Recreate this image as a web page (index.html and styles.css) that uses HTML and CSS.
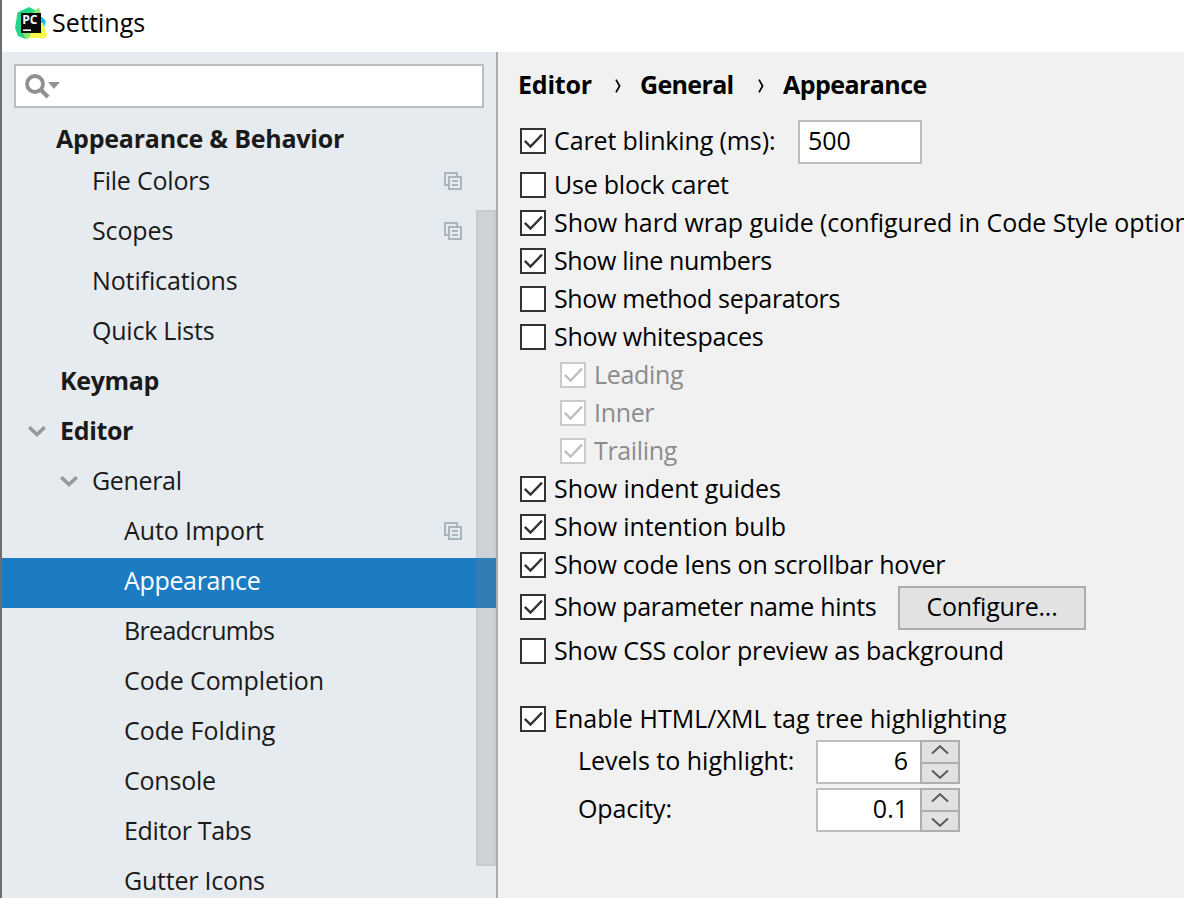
FILE: index.html
```html
<!DOCTYPE html>
<html lang="en">
<head>
<meta charset="utf-8">
<title>Settings</title>
<link rel="stylesheet" href="styles.css">
</head>
<body>
<svg width="0" height="0" class="defs">
  <symbol id="tick" viewBox="0 0 22 22"><path d="M2.8 10.8 8.5 16.5 20 4.6" fill="none" stroke="currentColor" stroke-width="2.4"/></symbol>
  <symbol id="copy" viewBox="0 0 18 18"><path d="M4 13H1V1h12v3M5 5h12v12H5zM8 9h6M8 13h6" fill="none" stroke="currentColor" stroke-width="2"/></symbol>
  <symbol id="down" viewBox="0 0 18 12"><path d="M1.2 1.2 9 8.6 16.8 1.2" fill="none" stroke="currentColor" stroke-width="3.6"/></symbol>
  <symbol id="crumb" viewBox="0 0 6 14"><path d="M1 .7 4.6 7 1 13.3" fill="none" stroke="currentColor" stroke-width="1.7"/></symbol>
  <symbol id="step" viewBox="0 0 18 10"><path d="M1 8.6 9 1.2 17 8.6" fill="none" stroke="currentColor" stroke-width="2"/></symbol>
</svg>
<div class="window">
  <header class="titlebar">
    <svg class="logo" width="32" height="32" viewBox="0 0 32 32">
      <path d="M2.500 5.500 14 0 20 3 22 25 11 32 3 29 0 21z" fill="#21d789"/>
      <path d="M23 10 27 10 31 14 29 21 23 25z" fill="#07c3f2"/>
      <path d="M15 8 24 .3 26 8z" fill="#8fe86b"/>
      <path d="M26 16 28 16 32 29 29 31 15 31 8 26z" fill="#fcf84a"/>
      <path d="M8 26h8l-2 5-3 1z" fill="#8fe86b"/>
      <path d="M6 6h20v20H6z" fill="#0b0b0b"/>
      <path d="M8 23.200h8" stroke="#fff" stroke-width="1.600"/>
      <text class="logo-text" x="7.200" y="17">PC</text>
    </svg>
    <h1 class="title">Settings</h1>
  </header>
  <div class="body">
    <aside class="sidebar">
      <div class="search">
        <svg width="36" height="26" viewBox="0 0 36 26"><g fill="none" stroke="#909090"><circle cx="10" cy="10" r="8" stroke-width="3.800"/><path d="M15.500 15.500 23 23" stroke-width="4.200"/></g><path d="M23 8h12L29 14.800z" fill="#909090"/></svg>
      </div>
      <div class="group t2">Appearance &amp; Behavior</div>
      <ul class="tree">
        <li class="l2 t2">File Colors<svg class="copy"><use href="#copy"/></svg></li>
        <li class="l2 t1">Scopes<svg class="copy"><use href="#copy"/></svg></li>
        <li class="l2 t1">Notifications</li>
        <li class="l2 t2">Quick Lists</li>
        <li class="l1 t3">Keymap</li>
        <li class="l1 t3"><svg class="arrow"><use href="#down"/></svg>Editor</li>
        <li class="l2 t3"><svg class="arrow"><use href="#down"/></svg>General</li>
        <li class="l3 t1">Auto Import<svg class="copy"><use href="#copy"/></svg></li>
        <li class="l3 t3 selected">Appearance</li>
        <li class="l3 t6">Breadcrumbs</li>
        <li class="l3 t1">Code Completion</li>
        <li class="l3">Code Folding</li>
        <li class="l3 t2">Console</li>
        <li class="l3 t3">Editor Tabs</li>
        <li class="l3 t2">Gutter Icons</li>
      </ul>
      <div class="scrollbar"></div>
    </aside>
    <main class="panel">
      <nav class="crumbs">
        <span class="c1 t2">Editor</span><svg><use href="#crumb"/></svg><span class="c2 t6">General</span><svg><use href="#crumb"/></svg><span class="c3 t5">Appearance</span>
      </nav>
      <div class="row tall">
        <i class="box"><svg><use href="#tick"/></svg></i><label class="caret t1">Caret blinking (ms):</label><div class="field">500</div>
      </div>
      <div class="row first"><i class="box"></i><label class="t2">Use block caret</label></div>
      <div class="row"><i class="box"><svg><use href="#tick"/></svg></i><label class="t0">Show hard wrap guide (configured in Code Style options)</label></div>
      <div class="row"><i class="box"><svg><use href="#tick"/></svg></i><label class="t3">Show line numbers</label></div>
      <div class="row"><i class="box"></i><label class="t3">Show method separators</label></div>
      <div class="row"><i class="box"></i><label class="t2">Show whitespaces</label></div>
      <div class="row off"><i class="box"><svg><use href="#tick"/></svg></i><label class="t3">Leading</label></div>
      <div class="row off"><i class="box"><svg><use href="#tick"/></svg></i><label class="t3">Inner</label></div>
      <div class="row off"><i class="box"><svg><use href="#tick"/></svg></i><label class="t3">Trailing</label></div>
      <div class="row"><i class="box"><svg><use href="#tick"/></svg></i><label class="t0">Show indent guides</label></div>
      <div class="row"><i class="box"><svg><use href="#tick"/></svg></i><label class="t1">Show intention bulb</label></div>
      <div class="row"><i class="box"><svg><use href="#tick"/></svg></i><label class="t2">Show code lens on scrollbar hover</label></div>
      <div class="row tall hints"><i class="box"><svg><use href="#tick"/></svg></i><label class="hint t3">Show parameter name hints</label><button class="button t2">Configure...</button></div>
      <div class="row first"><i class="box"></i><label class="t1">Show CSS color preview as background</label></div>
      <div class="row tags"><i class="box"><svg><use href="#tick"/></svg></i><label class="w0">Enable HTML/XML tag tree highlighting</label></div>
      <div class="row num"><label>Levels to highlight:</label>
        <div class="spinner"><span class="value">6</span><span class="steps"><b><svg><use href="#step"/></svg></b><b><svg class="flip"><use href="#step"/></svg></b></span></div></div>
      <div class="row num"><label class="t1">Opacity:</label>
        <div class="spinner"><span class="value">0.1</span><span class="steps"><b><svg><use href="#step"/></svg></b><b><svg class="flip"><use href="#step"/></svg></b></span></div></div>
    </main>
  </div>
</div>
</body>
</html>
```
FILE: styles.css
```css
* { box-sizing: border-box; }
body {
  margin: 0;
  font: 25px/34px "Open Sans", "Noto Sans", sans-serif;
  color: #000;
  overflow: hidden;
}
svg { display: block; flex: none; }
.defs { position: absolute; }

/* letter-spacing steps: w is wider, t0 to t6 get tighter */
.w0 { letter-spacing: 0.03px; }
.t0 { letter-spacing: -0.07px; }
.t1 { letter-spacing: -0.12px; }
.t2 { letter-spacing: -0.22px; }
.t3 { letter-spacing: -0.34px; }
.t5 { letter-spacing: -0.55px; }
.t6 { letter-spacing: -0.66px; }

.window {
  width: 1184px;
  height: 898px;
  display: flex;
  flex-direction: column;
  border-left: 2px solid #6e6e6e;
  background: #fff;
  overflow: hidden;
}
.titlebar { height: 52px; flex: none; display: flex; padding: 7px 0 0 13px; }
.title { margin: -2px 0 0 5px; font-size: 25px; font-weight: 400; letter-spacing: 0.08px; }
.logo-text { font: 700 12px "Open Sans", sans-serif; fill: #fff; }
.body { flex: 1; display: flex; min-height: 0; }

.sidebar {
  position: relative;
  width: 496px;
  flex: none;
  padding-top: 12px;
  background: #e6ebef;
  border-right: 2px solid #a9abad;
  color: #1a1a1a;
}
.search {
  width: 470px;
  height: 44px;
  margin-left: 12px;
  padding: 8px 0 0 9px;
  border: 2px solid #bdbdbd;
  background: #fff;
}
.group { height: 50px; padding: 13px 0 0 54px; font-weight: 700; }
.tree { list-style: none; margin: 0; padding: 0; }
.tree li { height: 50px; display: flex; align-items: center; padding-right: 34px; line-height: 44px; padding-bottom: 6px; }
.tree .l1 { padding-left: 58px; font-weight: 700; }
.tree .l2 { padding-left: 90px; }
.tree .l3 { padding-left: 122px; }
.tree .selected { background: #1b7cc4; color: #fff; }
.arrow { width: 18px; height: 12px; margin: 3px 14px 0 -32px; color: #959a9d; }
.copy { width: 18px; height: 18px; margin: 2px 0 0 auto; color: #a9b6be; }
.scrollbar {
  position: absolute;
  right: 0;
  top: 158px;
  width: 20px;
  height: 656px;
  background: rgba(128, 128, 138, 0.24);
  border: 2px solid rgba(110, 110, 110, 0.06);
}

.panel { flex: 1; min-width: 0; background: #f1f1f1; overflow: hidden; }
.crumbs { height: 68px; padding: 15px 0 0 20px; display: flex; font-weight: 700; }
.crumbs svg { width: 6px; height: 14px; margin-top: 12px; }
.c1 { width: 97px; }
.c2 { width: 118px; margin-left: 19px; }
.c3 { margin-left: 19px; }

.row { height: 38px; display: flex; align-items: center; padding-left: 22px; white-space: nowrap; }
.row label { flex: none; margin: -3px 0 0 8px; }
.row.tall { height: 44px; }
.row.tall .box { margin-top: -2px; }
.row.tall label { margin-top: -5px; }
.row.first { margin-top: 2px; }
.row.off { padding-left: 62px; color: #8c8c8c; }
.row.tags { margin-top: 30px; }
.hints { margin-top: 2px; }
.box { width: 26px; height: 26px; flex: none; border: 2px solid #333; background: #fff; color: #333; }
.box svg { width: 22px; height: 22px; }
.off .box { border-color: #cacaca; color: #bfbfbf; }
.caret { width: 244px; }
.hint { width: 344px; }
.field { width: 124px; height: 44px; padding: 1px 8px; border: 2px solid #bdbdbd; background: #fff; }
.button {
  width: 188px;
  height: 44px;
  padding: 0 0 5px;
  border: 2px solid #adadad;
  background: #e2e2e2;
  font: inherit;
  color: #000;
}
.row.num { height: 44px; margin-top: 2px; padding-left: 72px; }
.row.num + .row.num { margin-top: 4px; }
.row.num label { width: 238px; margin-top: -5px; }
.spinner { width: 144px; height: 44px; display: flex; border: 2px solid #bdbdbd; border-right-color: #adadad; background: #fff; }
.value { width: 102px; padding: 1px 12px 0 0; text-align: right; }
.steps { width: 40px; margin: -2px -2px -2px 0; display: flex; flex-direction: column; border: 2px solid #adadad; }
.steps b { height: 20px; padding: 3px 0 0 9px; background: #e2e2e2; color: #5c5c5c; }
.steps b + b { height: 20px; padding-top: 5px; border-top: 2px solid #adadad; }
.steps svg { width: 18px; height: 10px; }
.flip { transform: scaleY(-1); }
```
